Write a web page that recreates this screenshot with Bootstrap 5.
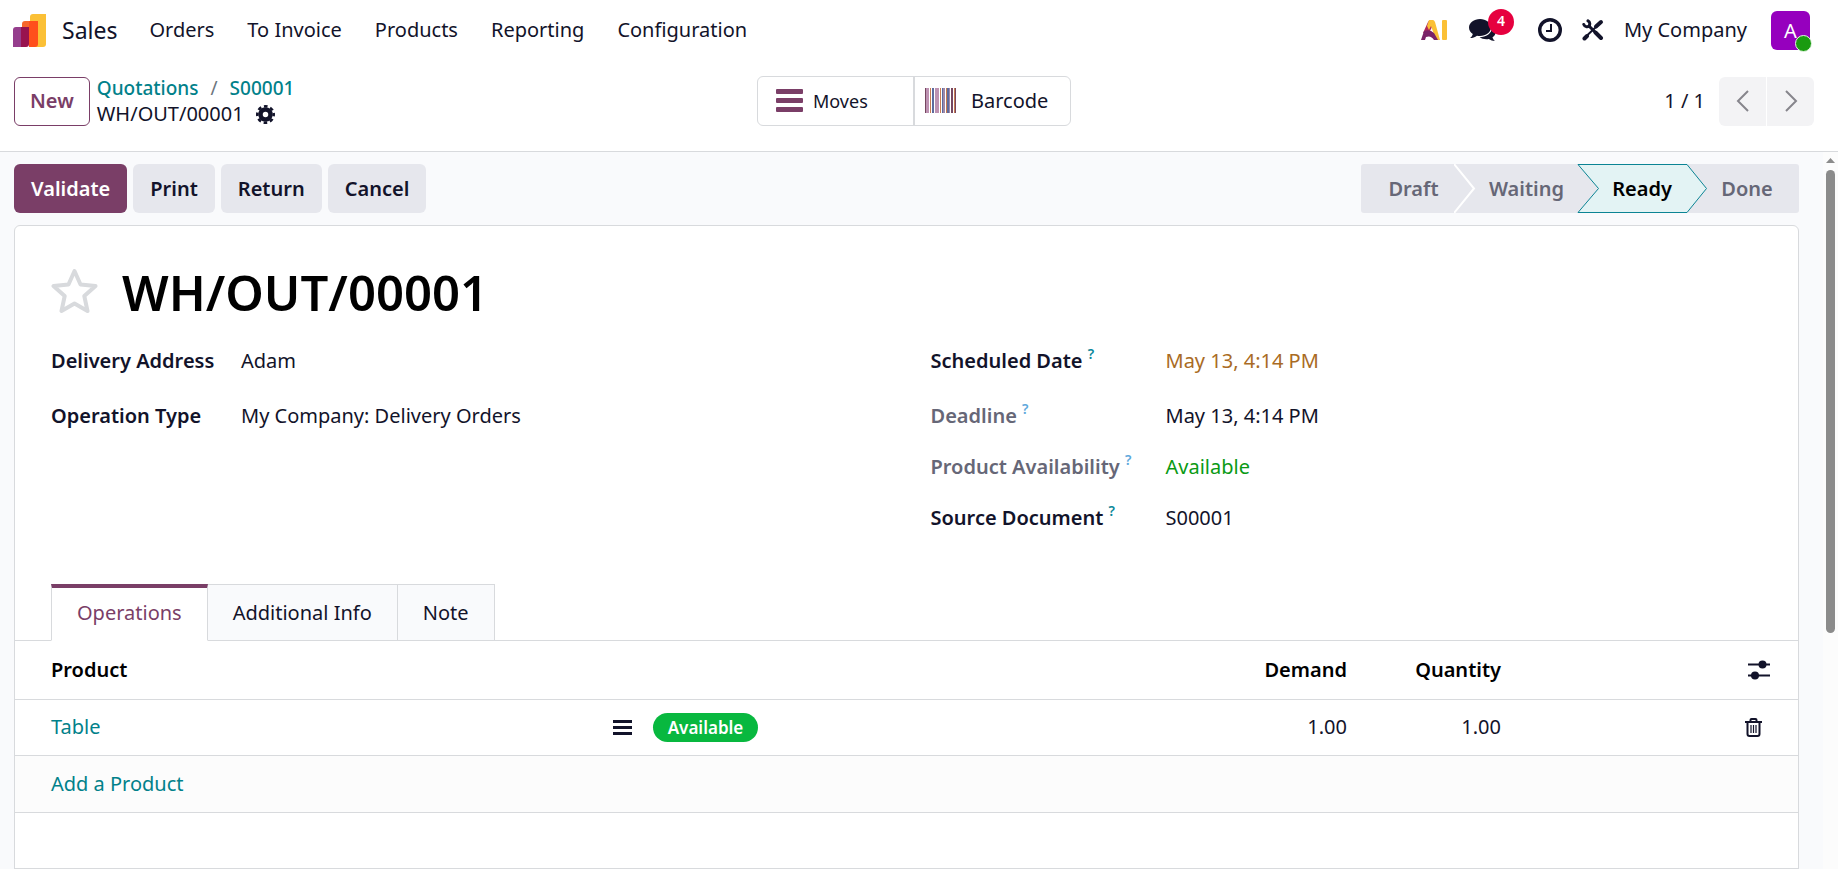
<!DOCTYPE html>
<html lang="en">
<head>
<meta charset="utf-8">
<meta name="viewport" content="width=device-width, initial-scale=1">
<title>WH/OUT/00001 - Sales</title>
<link href="https://cdn.jsdelivr.net/npm/bootstrap@5.3.0/dist/css/bootstrap.min.css" rel="stylesheet">
<style>
:root{--plum:#7a3e67;--ink:#12132a;--teal:#01818a;--line:#d8dadd;--soft:#e6e7ed;--muted-ink:#666777}
body{font-family:"Noto Sans",sans-serif;font-size:20px;line-height:24px;color:var(--ink);background:#fff}
a{color:var(--teal);text-decoration:none}
svg{display:block;flex:none}
.topbar{height:60px;padding:0 28px 0 13px}
.brand-name{font-size:23px;color:var(--ink);padding:0 16px}
.main-menu{gap:33px}
.main-menu .nav-link{padding:0;color:var(--ink)}
.main-menu{margin-left:16px}
.icon-btn{border:0;background:none;padding:0;color:var(--ink)}
.tray{gap:20px}
.chat-btn{margin:0 22px 0 2px}
.chat-count{position:absolute;left:19px;top:-10px;width:26px;height:26px;border-radius:13px;background:#e6003f;color:#fff;font-size:14px;font-weight:600;line-height:24px;text-align:center}
.avatar{width:39px;height:39px;border-radius:6px;background:#9600be;color:#fff;line-height:40px;border:0;padding:0;position:relative}
.avatar-dot{position:absolute;right:-2px;bottom:-2px;width:17px;height:17px;border-radius:50%;background:#1a9b10;border:1px solid #e6f5e5}
.control{height:92px;padding:16px 24px 25px 14px;border-bottom:1px solid var(--line)}
.control>*{flex:1 1 0}
.action{height:49px;border:0;border-radius:6px;padding:0 17px;background:var(--soft);color:var(--ink);font-weight:600}
.action-main{background:var(--plum);color:#fff}
.action-new{background:#fff;color:var(--plum);border:1px solid var(--plum);padding:0 15px}
.crumbs{margin-left:7px}
.crumb-line{line-height:26px}
.crumb-path{font-size:19px;font-weight:500}
.gear{margin-left:12px}
.stat-group{border:1px solid var(--line);border-radius:6px;height:50px;flex:none;width:314px}
.stat{border:0;background:none;color:var(--ink);padding:0;flex:1}
.stat+.stat{border-left:2px solid var(--line)}
.stat-small{font-size:18px}
.pager{width:47px;height:49px;border:0;background:#f3f3f5;color:#86858c;display:grid;place-items:center;padding:0}
.pager-pair{gap:1px;margin-left:14px}
.workarea{background:#f9fafc}
.content{padding:12px 24px 0 14px;min-width:0}
.actions{gap:6px}
.statusbar{height:49px;background:var(--soft);border-radius:3px}
.stage{border:0;background:none;padding:0;color:var(--muted-ink);font-weight:600}
.stage-draft{width:93px;padding-left:12px}.stage-waiting{width:101px}.stage-done{width:92px;padding-right:12px}
.stage-ready{width:130px;position:relative;color:#000}
.stage-ready svg{position:absolute;inset:0}
.stage-ready span{position:relative}
.sheet{border:1px solid var(--line);border-radius:6px 6px 0 0;background:#fff;margin-top:12px}
.sheet-head{padding:36px 36px 0}
.doc-title{font-size:49px;line-height:60px;font-weight:600;color:#000;margin:0}
.fields{padding:26px 36px 0;min-height:262px}
.fields>*{flex:1 1 0}
.field-grid{display:grid;align-content:start;line-height:26px}
.grid-left{grid-template-columns:190px 1fr;row-gap:29px}
.grid-right{grid-template-columns:235px 1fr;row-gap:25px}
.grid-right .first-row{padding-bottom:4px}
.field-name{font-weight:600}
.dim{color:var(--muted-ink)}
.hint{font-size:14px;color:#0b879a;top:-9px}
.dim .hint{color:#5fa9dc}
.late{color:#a96b24}.in-stock{color:#0a9a14}
.tabs{padding:0 36px;border-bottom:1px solid var(--line)}
.tab{height:57px;border:1px solid var(--line);border-left-width:0;background:#f9fafc;color:var(--ink);padding:0 25px;margin-bottom:-1px}
.tab-on{border-top:4px solid var(--plum);border-left-width:1px;border-bottom-color:#fff;background:#fff;color:var(--plum);padding:0 25px 3px}
.lines{table-layout:fixed;width:100%}
.lines th,.lines td{height:56px;border-bottom:1px solid var(--line);padding:0}
.lines th{height:58px;color:#000;font-weight:600}
.lines .lead-cell{padding-left:36px}
.lines .add-row td{background:#fcfcfc;height:57px}
.c-name{width:598px}.c-more{width:40px}.c-demand{width:200px}.c-qty{width:154px}.c-tools{width:297px}
.columns-btn{margin-right:28px}.delete-btn{margin-right:36px}
.pill{background:#08b83f;border-radius:15px;color:#fff;font-size:17px;font-weight:600;line-height:29px;width:105px;text-align:center;display:block}
.scroller{width:15px;flex:none;background:#fcfcfc;padding-top:6px}
.thumb{width:9px;height:463px;border-radius:5px;background:#8b8b8b;margin-top:7px}
</style>
</head>
<body class="d-flex flex-column min-vh-100">
<header class="topbar d-flex align-items-center">
  <a href="#" class="d-flex align-items-center" aria-label="Sales home">
    <svg width="33" height="33" viewBox="0 0 33 33"><path fill="#fbc036" d="M20 0h13v30q0 3-3 3H17V3q0-3 3-3z"/><path fill="#f7662b" d="M12 7h5v7H9v-4q0-3 3-3z"/><path fill="#ff4f1c" d="M16 7h9v23q0 3-3 3h-6z"/><path fill="#98134e" d="M8 13h8v17q0 3-3 3H8z"/><path fill="#953e8d" d="M3 13h5v20H0V16q0-3 3-3z"/></svg>
    <span class="brand-name">Sales</span>
  </a>
  <nav class="nav main-menu">
    <a class="nav-link" href="#">Orders</a><a class="nav-link" href="#">To Invoice</a><a class="nav-link" href="#">Products</a><a class="nav-link" href="#">Reporting</a><a class="nav-link" href="#">Configuration</a>
  </nav>
  <div class="tray d-flex align-items-center ms-auto">
    <button class="icon-btn" aria-label="Assistant"><svg width="26" height="20" viewBox="0 0 26 20"><path fill="#b02a5b" d="M7 2q1-2 3-2l1 7-3 6H2z"/><path fill="#fbc036" d="M8 0h4q1 0 2 2l5 18h-4L10 6 8 10 6 6z"/><path fill="#7a2268" d="M3 11q6-2 10 2l4 7h-4q-3-5-8-3l-1 3H0z"/><rect x="21" width="5" height="20" rx="1" fill="#fbc036"/></svg></button>
    <button class="icon-btn chat-btn position-relative" aria-label="Messages"><svg width="27" height="23" viewBox="0 0 27 23" fill="currentColor"><path d="M11 0c6 0 11 3.700 11 8.500S17 17 11 17c-1 0-2 0-3-.3C6 18.200 3.500 19 1 19c1.500-1 2.500-2.500 2.800-4C1.500 13.500 0 11.200 0 8.500 0 3.700 5 0 11 0z"/><path d="M23.500 8c2 1.300 3.200 3 3.200 5 0 2.200-1.200 4-3.200 5.300.3 1.400 1.200 2.700 2.500 3.700-2.300 0-4.500-.7-6.200-2-3.500.6-7-.2-9.300-1.800C17 18 22.500 15 23.500 8z"/></svg><span class="chat-count">4</span></button>
    <button class="icon-btn" aria-label="Activities"><svg width="24" height="24" viewBox="0 0 24 24" fill="none" stroke="currentColor"><circle cx="12" cy="12" r="10.300" stroke-width="3.400"/><path stroke-width="2" d="M13 6v7H8"/></svg></button>
    <button class="icon-btn" aria-label="Tools"><svg width="22" height="22" viewBox="0 0 22 22" fill="none" stroke="currentColor" stroke-linecap="round"><path stroke-width="4" d="M19 3l-5 4.500"/><path stroke-width="2" d="M14.500 7.500L5.500 16"/><path stroke-width="4" d="M5 17l-2.500 2.500M13.500 13.500L19 19"/><path stroke-width="3" d="M7 7l7 7"/><path stroke-width="3" d="M1.800 5.500C3 8.500 6 8 7 7s1.300-4-1-5.200"/></svg></button>
    <a href="#" class="text-reset">My Company</a>
    <button class="avatar ms-1" aria-label="User menu">A<span class="avatar-dot"></span></button>
  </div>
</header>

<section class="control d-flex align-items-center">
  <div class="d-flex align-items-center">
    <button class="action action-new">New</button>
    <div class="crumbs">
      <nav class="crumb-line crumb-path" aria-label="Breadcrumb"><a href="#">Quotations</a><span class="px-2 mx-1 fw-normal text-secondary">/</span><a href="#">S00001</a></nav>
      <div class="crumb-line d-flex align-items-center">WH/OUT/00001
        <button class="icon-btn gear" aria-label="Actions"><svg width="19" height="19" viewBox="0 0 19 19"><g fill="none" stroke="currentColor"><circle cx="9.500" cy="9.500" r="5" stroke-width="4.500"/><circle cx="9.500" cy="9.500" r="8.200" stroke-width="2.600" stroke-dasharray="3.600 2.840" stroke-dashoffset="1.800"/></g></svg></button>
      </div>
    </div>
  </div>
  <div class="stat-group d-flex">
    <button class="stat stat-small d-flex align-items-center"><svg class="ms-3 me-2" width="31" height="24" viewBox="0 0 31 24" fill="#7a3e67"><rect x="2" width="27" height="5" rx="1"/><rect x="2" y="9" width="27" height="5" rx="1"/><rect x="2" y="18" width="27" height="5" rx="1"/></svg>Moves</button>
    <button class="stat d-flex align-items-center"><svg width="56" height="26" viewBox="0 0 56 26"><path fill="#75465f" d="M10 0h1v25h-1zM36 0h2v25h-2zM40 0h1v25h-1z"/><path fill="#bd92b2" d="M11 0h3v25h-3zM20 0h4v25h-4z"/><path fill="#c97c52" d="M15 0h1v25h-1zM25 0h1v25h-1zM31 0h1v25h-1zM39 0h1v25h-1z"/><path fill="#5c6a9d" d="M17 0h2v25h-2zM27 0h1v25h-1zM32 0h2v25h-2z"/><path fill="#9d88aa" d="M28 0h2v25h-2zM34 0h1v25h-1z"/></svg>Barcode</button>
  </div>
  <div class="d-flex align-items-center justify-content-end">
    <span>1 / 1</span>
    <div class="pager-pair d-flex">
      <button class="pager rounded-start-2" aria-label="Previous"><svg width="14" height="22" viewBox="0 0 14 22" fill="none" stroke="currentColor" stroke-width="2"><path d="M12 1L2 11l10 10"/></svg></button>
      <button class="pager rounded-end-2" aria-label="Next"><svg width="14" height="22" viewBox="0 0 14 22" fill="none" stroke="currentColor" stroke-width="2"><path d="M2 1l10 10L2 21"/></svg></button>
    </div>
  </div>
</section>

<main class="workarea d-flex flex-grow-1">
  <div class="content d-flex flex-column flex-grow-1">
    <div class="d-flex justify-content-between">
      <div class="actions d-flex">
        <button class="action action-main">Validate</button><button class="action">Print</button><button class="action">Return</button><button class="action">Cancel</button>
      </div>
      <div class="statusbar d-flex">
        <button class="stage stage-draft">Draft</button>
        <svg width="22" height="49" viewBox="0 0 22 49" fill="none" stroke="#fff" stroke-width="2"><path d="M0 0l20 24.500L0 49"/></svg>
        <button class="stage stage-waiting">Waiting</button>
        <button class="stage stage-ready" aria-current="step"><svg width="130" height="49" viewBox="0 0 130 49"><path fill="#e3f3f4" stroke="#0b8494" d="M1 .5h109l19.500 24L110 48.500H1l20.500-24z"/></svg><span>Ready</span></button>
        <button class="stage stage-done">Done</button>
      </div>
    </div>
    <div class="sheet flex-grow-1">
      <div class="sheet-head d-flex align-items-center">
        <button class="icon-btn" aria-label="Favourite"><svg width="47" height="46" viewBox="0 0 47 46" fill="none" stroke="#d8dadd" stroke-width="4" stroke-linejoin="round"><path d="M23.500 2l6 13.500 15 1.500-11.200 10 3.200 15-13-7.500-13 7.500 3.200-15L2.500 17l15-1.500z"/></svg></button>
        <h1 class="doc-title ms-4">WH/OUT/00001</h1>
      </div>
      <div class="fields d-flex gap-5">
        <div class="field-grid grid-left">
          <div class="field-name">Delivery Address</div><span>Adam</span>
          <div class="field-name">Operation Type</div><span>My Company: Delivery Orders</span>
        </div>
        <div class="field-grid grid-right">
          <div class="field-name first-row">Scheduled Date <sup class="hint">?</sup></div><span class="late">May 13, 4:14 PM</span>
          <div class="field-name dim">Deadline <sup class="hint">?</sup></div><span>May 13, 4:14 PM</span>
          <div class="field-name dim">Product Availability <sup class="hint">?</sup></div><span class="in-stock">Available</span>
          <div class="field-name">Source Document <sup class="hint">?</sup></div><span>S00001</span>
        </div>
      </div>
      <div class="tabs d-flex" role="tablist">
        <button class="tab tab-on" role="tab" aria-selected="true">Operations</button><button class="tab" role="tab">Additional Info</button><button class="tab" role="tab">Note</button>
      </div>
      <table class="lines">
        <colgroup><col class="c-name"><col class="c-more"><col><col class="c-demand"><col class="c-qty"><col class="c-tools"></colgroup>
        <thead><tr><th class="lead-cell" colspan="3">Product</th><th class="text-end">Demand</th><th class="text-end">Quantity</th><th><button class="icon-btn columns-btn d-block ms-auto" aria-label="Columns"><svg width="22" height="20" viewBox="0 0 22 20"><path stroke="currentColor" stroke-width="2" d="M0 4.500h22M0 15.500h22"/><circle cx="14.500" cy="4.500" r="4" fill="currentColor"/><circle cx="7" cy="15.500" r="4" fill="currentColor"/></svg></button></th></tr></thead>
        <tbody>
          <tr><td class="lead-cell"><a href="#">Table</a></td><td><button class="icon-btn d-block" aria-label="Details"><svg width="19" height="17" viewBox="0 0 19 17" fill="currentColor"><path d="M0 1h19v3H0zM0 7h19v3H0zM0 13h19v3H0z"/></svg></button></td><td><span class="pill">Available</span></td><td class="text-end">1.00</td><td class="text-end">1.00</td><td><button class="icon-btn delete-btn d-block ms-auto" aria-label="Delete"><svg width="17" height="19" viewBox="0 0 17 19" fill="none" stroke="currentColor"><path stroke-width="2" d="M0 4h17M2.500 4v12q0 2 2 2h8q2 0 2-2V4M5.500 3.500V2q0-1 1-1h4q1 0 1 1v1.500"/><path stroke-width="1.200" d="M6 7v8M8.500 7v8M11 7v8"/></svg></button></td></tr>
          <tr class="add-row"><td class="lead-cell" colspan="6"><a href="#">Add a Product</a></td></tr>
          <tr><td colspan="6"></td></tr>
        </tbody>
      </table>
    </div>
  </div>
  <div class="scroller d-flex flex-column align-items-center" aria-hidden="true">
    <svg width="9" height="5" viewBox="0 0 9 5" fill="#8b8b8b"><path d="M4.500 0L9 5H0z"/></svg>
    <div class="thumb"></div>
  </div>
</main>
<script src="https://cdn.jsdelivr.net/npm/bootstrap@5.3.0/dist/js/bootstrap.bundle.min.js"></script>
</body>
</html>
